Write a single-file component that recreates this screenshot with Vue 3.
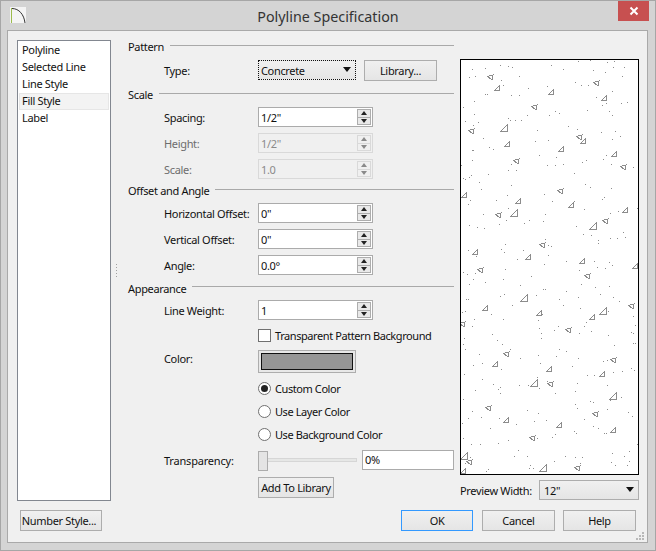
<template>
  <div class="dialog">
    <div class="titlebar">
      <svg class="app-icon" width="16" height="16" viewBox="0 0 16 16">
        <rect width="16" height="16" fill="#f4f4f4" />
        <path d="M1.500 1v15" stroke="#9cbb4c" stroke-width="1" />
        <path d="M2 1.500c7 0 12 6 13 14.500" stroke="#333" stroke-width="1" fill="none" />
      </svg>
      <span class="title">Polyline Specification</span>
      <div class="close">
        <svg width="10" height="10" viewBox="0 0 10 10">
          <path d="M1.500 1.500l7 7M8.500 1.500l-7 7" stroke="#fff" stroke-width="2" />
        </svg>
      </div>
    </div>

    <div class="body">
      <div class="main">
        <ul class="tabs">
          <li v-for="tab in tabs" :key="tab" :class="{ active: tab === 'Fill Style' }">{{ tab }}</li>
        </ul>

        <div class="gutter"><i></i><i></i><i></i><i></i><i></i></div>

        <div class="form">
          <div class="legend"><span>Pattern</span><hr /></div>
          <div class="row pattern-row">
            <label>Type:</label>
            <div class="combo focused">Concrete<b class="caret"></b></div>
            <button class="btn library">Library...</button>
          </div>

          <template v-for="section in sections" :key="section.title">
            <div class="legend" :class="section.cls"><span>{{ section.title }}</span><hr /></div>
            <div v-for="row in section.rows" :key="row.label" class="row" :class="{ disabled: row.disabled }">
              <label>{{ row.label }}</label>
              <div class="spinner">
                <span class="value">{{ row.value }}</span>
                <div class="spin">
                  <div class="spin-half"><b class="up"></b></div>
                  <div class="spin-half"><b class="down"></b></div>
                </div>
              </div>
            </div>
          </template>

          <div class="check-row">
            <span class="checkbox"></span>
            <span class="tight">Transparent Pattern Background</span>
          </div>

          <div class="row color-row">
            <label>Color:</label>
            <div class="swatch"><div></div></div>
          </div>

          <div class="radios">
            <div v-for="(r, i) in radios" :key="r" class="radio-row">
              <span class="radio" :class="{ on: i === 0 }"></span>
              <span class="tight">{{ r }}</span>
            </div>
          </div>

          <div class="row transparency">
            <label>Transparency:</label>
            <div class="slider"><span class="thumb"></span></div>
            <div class="percent">0%</div>
          </div>

          <button class="btn add-lib">Add To Library</button>
        </div>

        <div class="side">
          <div class="preview">
            <svg width="177" height="414" viewBox="461 60 177 414" shape-rendering="crispEdges">
              <rect v-for="(d, i) in dots" :key="'d' + i" :x="d[0]" :y="d[1]" width="1" height="1" fill="#8c8c8c" />
              <path v-for="(p, i) in marks" :key="'m' + i" :d="p" fill="none" stroke="#8c8c8c" stroke-width="1" />
            </svg>
          </div>
          <div class="preview-width">
            <span>Preview Width:</span>
            <div class="combo small">12"<b class="caret"></b></div>
          </div>
        </div>
      </div>

      <div class="footer">
        <button class="btn number">Number Style...</button>
        <div class="actions">
          <button class="btn action default">OK</button>
          <button class="btn action">Cancel</button>
          <button class="btn action">Help</button>
        </div>
      </div>

      <svg class="grip" width="9" height="9" viewBox="0 0 9 9" shape-rendering="crispEdges">
        <path d="M6 0h2v2H6zM3 3h2v2H3zM6 3h2v2H6zM0 6h2v2H0zM3 6h2v2H3zM6 6h2v2H6z" fill="#b8b8b8" />
      </svg>
    </div>
  </div>
</template>

<script setup>
const tabs = ['Polyline', 'Selected Line', 'Line Style', 'Fill Style', 'Label']

const sections = [
  {
    title: 'Scale',
    cls: 'scale',
    rows: [
      { label: 'Spacing:', value: '1/2"' },
      { label: 'Height:', value: '1/2"', disabled: true },
      { label: 'Scale:', value: '1.0', disabled: true }
    ]
  },
  {
    title: 'Offset and Angle',
    cls: 'offset',
    rows: [
      { label: 'Horizontal Offset:', value: '0"' },
      { label: 'Vertical Offset:', value: '0"' },
      { label: 'Angle:', value: '0.0°' }
    ]
  },
  {
    title: 'Appearance',
    cls: 'appearance',
    rows: [{ label: 'Line Weight:', value: '1' }]
  }
]

const radios = ['Custom Color', 'Use Layer Color', 'Use Background Color']

// concrete fill pattern, in window coordinates
const dotData = `472,69 485,68 500,65 508,66 512,67 551,65 563,69 578,61 590,60 607,62 614,61 613,67 624,67 593,70 605,72 622,76
469,77 475,76 519,76 501,80 503,85 575,82 581,85 588,85 528,88 547,86 612,91 485,94 487,94 511,95 519,95 596,97 474,101 606,103
602,105 621,103 627,102 463,107 587,110 609,111 474,114 527,115 549,115 555,111 559,113 612,115 508,118 510,120 515,120 521,120
465,121 478,122 473,125 568,126 577,129 537,130 601,132 615,131 620,136 483,138 535,141 548,140 612,139 489,147 493,149 472,150
473,150 539,155 556,157 606,155 472,160 603,159 586,160 582,162 511,164 547,165 555,165 563,164 611,164 461,165 508,170 516,170
633,167 574,173 488,174 471,175 469,177 463,178 465,179 479,182 511,185 585,184 590,187 481,189 611,188 470,200 468,204 496,200
507,195 544,194 552,201 574,201 602,199 604,197 508,208 584,209 483,214 545,214 610,213 618,211 637,208 506,220 529,220 543,221
524,223 499,224 469,225 477,227 484,228 576,226 583,234 591,235 623,232 610,238 617,238 625,237 545,239 598,240 598,243 505,244
548,245 551,246 468,250 501,249 504,252 523,250 476,256 548,255 517,259 566,261 594,261 544,264 609,262 612,265 597,267 605,268
505,269 579,270 463,272 467,274 475,273 531,276 473,279 503,279 485,282 469,284 520,285 581,284 609,286 595,287 543,289 545,289
566,291 504,294 500,296 600,294 536,295 578,297 613,297 559,299 619,301 466,299 468,299 512,305 563,305 580,308 465,311 462,312
491,314 542,314 608,311 633,316 474,319 503,319 538,320 586,322 584,326 558,326 472,326 539,328 554,330 591,331 635,325 631,332
541,333 579,333 492,334 633,333 464,338 497,340 502,344 541,338 608,335 463,344 614,345 633,343 635,343 465,349 510,349 559,349
566,351 479,354 538,355 556,356 520,358 578,358 603,361 607,360 540,363 482,363 473,365 572,366 501,369 631,368 634,370 622,371
613,372 464,374 587,375 594,375 482,379 537,377 547,381 577,383 493,384 519,385 528,385 607,385 500,387 498,389 539,388 500,393
575,391 475,390 555,393 621,397 463,399 590,401 593,402 610,400 575,404 577,408 607,409 527,410 472,411 628,412 538,413 632,416
481,417 468,418 499,418 584,419 534,421 546,420 462,423 516,424 593,426 598,428 490,428 574,431 576,433 604,433 606,433 555,434
552,437 537,438 463,438 508,440 471,444 480,444 498,443 637,444 518,450 514,456 527,456 612,453 629,451 624,456 565,456 575,457
582,457 470,457 554,461 629,461 611,462 580,463 615,465 627,465 530,465 529,468 533,468 488,469 486,471 465,463`

const dots = dotData.split(/\s+/).map((p) => p.split(',').map(Number))

// a = small triangle, l = large triangle, f = pennant
const markData = {
  a: [[497,88],[551,92],[604,98],[507,144],[561,149],[583,141],[614,154],[464,195],[518,201],[571,205],[625,210],[475,252],[528,257],[582,261],[635,266],[485,308],[539,313],[592,317],[495,364],[549,369],[602,374],[506,420],[559,425],[613,430],[463,471]],
  l: [[504,128],[514,213],[593,226],[524,298],[603,311],[534,383],[613,396],[464,456],[543,468]],
  f: [[491,77],[597,83],[535,107],[472,131],[580,137],[517,161],[624,167],[561,191],[499,215],[606,221],[543,245],[481,270],[588,276],[632,306],[463,324],[569,330],[507,354],[614,360],[551,384],[489,408],[596,414],[533,438],[470,462],[578,468]]
}

const shape = {
  a: (x, y) => `M${x - 2.5} ${y + 2.5}H${x + 2.5}V${y - 2.5}Z`,
  l: (x, y) => `M${x - 3.5} ${y + 3.5}H${x + 3.5}V${y - 3.5}Z`,
  f: (x, y) => `M${x - 3.5} ${y - 0.5}L${x + 3.5} ${y - 2.5}M${x - 3.5} ${y - 0.5}L${x + 0.5} ${y + 2.5}H${x + 1.5}V${y - 2.5}`
}

const marks = Object.entries(markData).flatMap(([k, list]) =>
  list.map(([x, y]) => shape[k](x, y))
)
</script>

<style scoped>
.dialog {
  width: 656px;
  height: 551px;
  box-sizing: border-box;
  background: #d4d4d4;
  border: 1px solid #a6a6a6;
  display: flex;
  flex-direction: column;
  font-family: "Noto Sans", "Open Sans", sans-serif;
  font-size: 11px;
  letter-spacing: -0.33px;
  white-space: nowrap;
  color: #111;
}

.tight {
  letter-spacing: -0.42px;
}

.titlebar {
  height: 29px;
  flex: none;
  position: relative;
  display: flex;
  align-items: center;
  justify-content: center;
}

.app-icon {
  position: absolute;
  left: 9px;
  top: 6px;
}

.title {
  font-size: 14.3px;
  letter-spacing: 0;
  color: #333;
  margin-top: 1px;
}

.close {
  position: absolute;
  right: 6px;
  top: 0;
  width: 31px;
  height: 20px;
  background: #c75050;
  display: flex;
  align-items: center;
  justify-content: center;
}

.body {
  position: relative;
  margin: 0 7px 7px 6px;
  flex: 1;
  background: #f0f0f0;
  border: 1px solid #a9a9a9;
  padding: 9px 9px 0 9px;
  display: flex;
  flex-direction: column;
}

.main {
  display: flex;
  height: 461px;
}

.tabs {
  list-style: none;
  margin: 0;
  padding: 1px;
  width: 94px;
  box-sizing: border-box;
  flex: none;
  background: #fff;
  border: 1px solid #828790;
}

.tabs li {
  height: 17px;
  line-height: 16px;
  padding-left: 3px;
  box-sizing: border-box;
}

.tabs li.active {
  background: #f3f3f3;
  border: 1px solid #e6e6e6;
  padding-left: 2px;
  line-height: 14px;
}

.gutter {
  width: 17px;
  box-sizing: border-box;
  padding-right: 6px;
  flex: none;
  display: flex;
  flex-direction: column;
  align-items: center;
  justify-content: center;
  gap: 2px;
}

.gutter i {
  width: 1px;
  height: 1px;
  background: #a0a0a0;
}

.form {
  width: 326px;
  flex: none;
}

.legend {
  height: 14px;
  display: flex;
  align-items: center;
  gap: 6px;
  line-height: 14px;
}

.legend hr {
  flex: 1;
  margin: 0 0 4px;
  border: 0;
  height: 1px;
  background: #a9a9a9;
}

.legend.scale {
  margin-top: 8px;
}

.legend.offset {
  margin-top: 5px;
}

.legend.appearance {
  margin-top: 6px;
}

.legend.appearance span {
  padding-top: 1px;
}

.row {
  display: flex;
  align-items: center;
  height: 20px;
  margin-top: 6px;
  padding-left: 36px;
}

.legend + .row {
  margin-top: 5px;
}

.pattern-row.row {
  margin-top: 6px;
}

.row label {
  width: 94px;
  flex: none;
}

.row.disabled {
  color: #6d6d6d;
}

.spinner {
  width: 115px;
  height: 20px;
  box-sizing: border-box;
  border: 1px solid #ababab;
  background: #fff;
  display: flex;
  align-items: center;
  justify-content: space-between;
}

.disabled .spinner {
  background: #f0f0f0;
  border-color: #d9d9d9;
}

.disabled .value {
  color: #8a8a8a;
}

.value {
  padding-left: 2px;
}

.spin {
  width: 14px;
  height: 16px;
  margin-right: 1px;
  border: 1px solid #adadad;
  box-sizing: border-box;
  background: #e9e9e9;
  display: flex;
  flex-direction: column;
}

.disabled .spin {
  border-color: #d9d9d9;
  background: #f0f0f0;
}

.spin-half {
  flex: 1;
  display: flex;
  align-items: center;
  justify-content: center;
}

.spin-half + .spin-half {
  border-top: 1px solid #adadad;
}

.disabled .spin-half + .spin-half {
  border-top-color: #d9d9d9;
}

.up {
  border-left: 3.500px solid transparent;
  border-right: 3.500px solid transparent;
  border-bottom: 4px solid #222;
}

.down {
  border-left: 3.500px solid transparent;
  border-right: 3.500px solid transparent;
  border-top: 4px solid #222;
}

.disabled .up {
  border-bottom-color: #8a8a8a;
}

.disabled .down {
  border-top-color: #8a8a8a;
}

.btn {
  font: inherit;
  letter-spacing: inherit;
  color: #111;
  height: 21px;
  padding: 0;
  border: 1px solid #adadad;
  background: linear-gradient(#f0f0f0, #e5e5e5);
  box-sizing: border-box;
}

.combo {
  position: relative;
  height: 20px;
  box-sizing: border-box;
  width: 98px;
  border: 1px solid #adadad;
  background: linear-gradient(#f0f0f0, #e5e5e5);
  padding-left: 2px;
  line-height: 19px;
}

.combo.focused {
  border: 1px dotted #111;
}

.caret {
  position: absolute;
  right: 4px;
  top: 6px;
  border-left: 4px solid transparent;
  border-right: 4px solid transparent;
  border-top: 5px solid #111;
}

.library {
  width: 73px;
  margin-left: 8px;
}

.check-row {
  display: flex;
  align-items: center;
  gap: 4px;
  height: 16px;
  margin: 7px 0 0 130px;
}

.checkbox {
  width: 13px;
  height: 13px;
  box-sizing: border-box;
  background: #fff;
  border: 1px solid #707070;
}

.color-row.row {
  height: 23px;
  margin-top: 7px;
}

.color-row label {
  align-self: flex-start;
  line-height: 17px;
}

.swatch {
  width: 98px;
  height: 23px;
  box-sizing: border-box;
  padding: 2px;
  border: 1px solid #adadad;
  background: #e8e8e8;
}

.swatch div {
  height: 100%;
  box-sizing: border-box;
  background: #969696;
  border: 1px solid #111;
}

.radios {
  margin: 4px 0 0 130px;
}

.radio-row {
  height: 23px;
  display: flex;
  align-items: center;
  gap: 4px;
}

.radio {
  position: relative;
  width: 13px;
  height: 13px;
  box-sizing: border-box;
  border: 1px solid #707070;
  border-radius: 50%;
  background: #fff;
}

.radio.on::after {
  content: "";
  position: absolute;
  left: 2px;
  top: 2px;
  width: 7px;
  height: 7px;
  border-radius: 50%;
  background: #222;
}

.transparency.row {
  margin-top: 4px;
}

.transparency label {
  letter-spacing: -0.2px;
}

.slider {
  position: relative;
  width: 99px;
  height: 4px;
  background: #e6e7e6;
  border: 1px solid #d6d6d6;
  box-sizing: border-box;
}

.thumb {
  position: absolute;
  left: -1px;
  top: -8px;
  width: 10px;
  height: 20px;
  box-sizing: border-box;
  background: #e4e4e4;
  border: 1px solid #acacac;
}

.percent {
  width: 92px;
  height: 20px;
  margin-left: 5px;
  box-sizing: border-box;
  background: #fff;
  border: 1px solid #ababab;
  padding-left: 2px;
  line-height: 18px;
}

.add-lib {
  display: block;
  width: 76px;
  margin: 7px 0 0 130px;
}

.side {
  width: 179px;
  margin-left: 6px;
  flex: none;
  padding-top: 19px;
}

.preview {
  height: 416px;
  box-sizing: border-box;
  background: #fff;
  border: 1px solid #000;
}

.preview svg {
  display: block;
}

.preview-width {
  margin-top: 5px;
  display: flex;
  align-items: center;
  justify-content: space-between;
}

.combo.small {
  width: 100px;
  padding-left: 4px;
}

.footer {
  margin-top: 9px;
  display: flex;
  justify-content: space-between;
}

.number {
  width: 82px;
  margin-left: 3px;
  padding-right: 4px;
}

.actions {
  display: flex;
  gap: 8px;
  margin-right: 2px;
}

.action {
  width: 73px;
}

.default {
  width: 72px;
  margin-right: 1px;
  border-color: #3399ff;
}

.grip {
  position: absolute;
  right: 2px;
  bottom: 1px;
}
</style>

<style>
html,
body {
  margin: 0;
}
</style>
